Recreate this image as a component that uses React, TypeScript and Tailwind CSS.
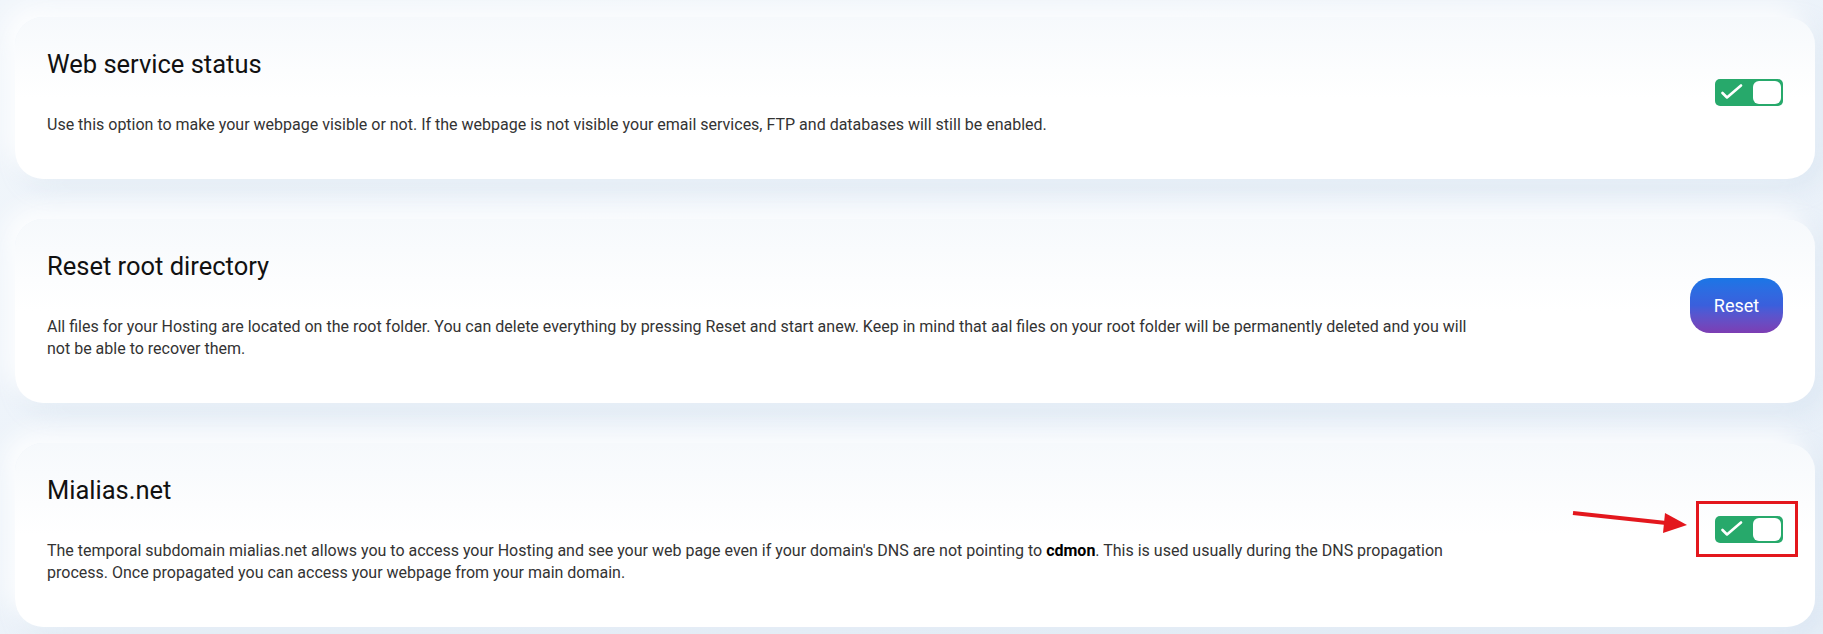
import type { ReactNode } from "react";

function Toggle() {
  return (
    <div className="relative flex h-[27px] w-[68px] items-center rounded-[5px] bg-[#27a96b]">
      <svg className="ml-[6px] h-[16px] w-[22px]" viewBox="0 0 22 16" fill="none">
        <path d="M1.5 9 L6 13.5 L20 1.5" stroke="white" strokeWidth="2.6" strokeLinecap="round" strokeLinejoin="round" />
      </svg>
      <div className="absolute right-[2px] top-[2px] h-[23px] w-[28px] rounded-[6px] bg-white" />
    </div>
  );
}

function Card({ title, children, action }: { title: string; children: ReactNode; action: ReactNode }) {
  return (
    <div className="flex items-center justify-between rounded-[28px] bg-gradient-to-b from-[#f6f9fc] via-white to-white px-8 pb-[43px] pt-[31px] shadow-[-10px_-10px_24px_rgba(255,255,255,0.9),8px_8px_24px_rgba(180,202,228,0.25)]">
      <div className="max-w-[1425px]">
        <h2 className="text-[25.5px] leading-[32px] text-[#111]">{title}</h2>
        <p className="mt-[34px] text-[16px] leading-[22px] text-[#333]">{children}</p>
      </div>
      <div className="shrink-0">{action}</div>
    </div>
  );
}

export default function App() {
  return (
    <div
      className="min-h-[634px] bg-gradient-to-br from-[#f1f6fb] to-[#e7eff8] pb-4 pl-[15px] pr-[8px] pt-[17px]"
      style={{ fontFamily: "Roboto, 'Liberation Sans', sans-serif" }}
    >
      <div className="flex flex-col gap-10">
        <Card title="Web service status" action={<Toggle />}>
          Use this option to make your webpage visible or not. If the webpage is not visible your email services, FTP and databases will still be enabled.
        </Card>

        <Card
          title="Reset root directory"
          action={
            <button className="h-[55px] w-[93px] rounded-[20px] bg-gradient-to-b from-[#1976e6] via-[#3a5fdc] to-[#7c3db3] text-[18px] text-white">
              Reset
            </button>
          }
        >
          All files for your Hosting are located on the root folder. You can delete everything by pressing Reset and start anew. Keep in mind that aal files on your root folder will be permanently deleted and you will not be able to recover them.
        </Card>

        <Card
          title="Mialias.net"
          action={
            <div className="relative">
              <Toggle />
              <div className="absolute -bottom-[14px] -left-[19px] -right-[15px] -top-[15px] border-[3px] border-[#e3171d]" />
              <svg className="absolute -left-[144px] -top-[8px] h-[30px] w-[118px] overflow-visible" viewBox="0 0 118 30" fill="none">
                <line x1="2" y1="5" x2="100" y2="15.5" stroke="#e3171d" strokeWidth="4" />
                <polygon points="94,5 116,17 92,25" fill="#e3171d" />
              </svg>
            </div>
          }
        >
          The temporal subdomain mialias.net allows you to access your Hosting and see your web page even if your domain's DNS are not pointing to{" "}
          <b className="font-bold text-black">cdmon</b>. This is used usually during the DNS propagation process. Once propagated you can access your webpage from your main domain.
        </Card>
      </div>
    </div>
  );
}
